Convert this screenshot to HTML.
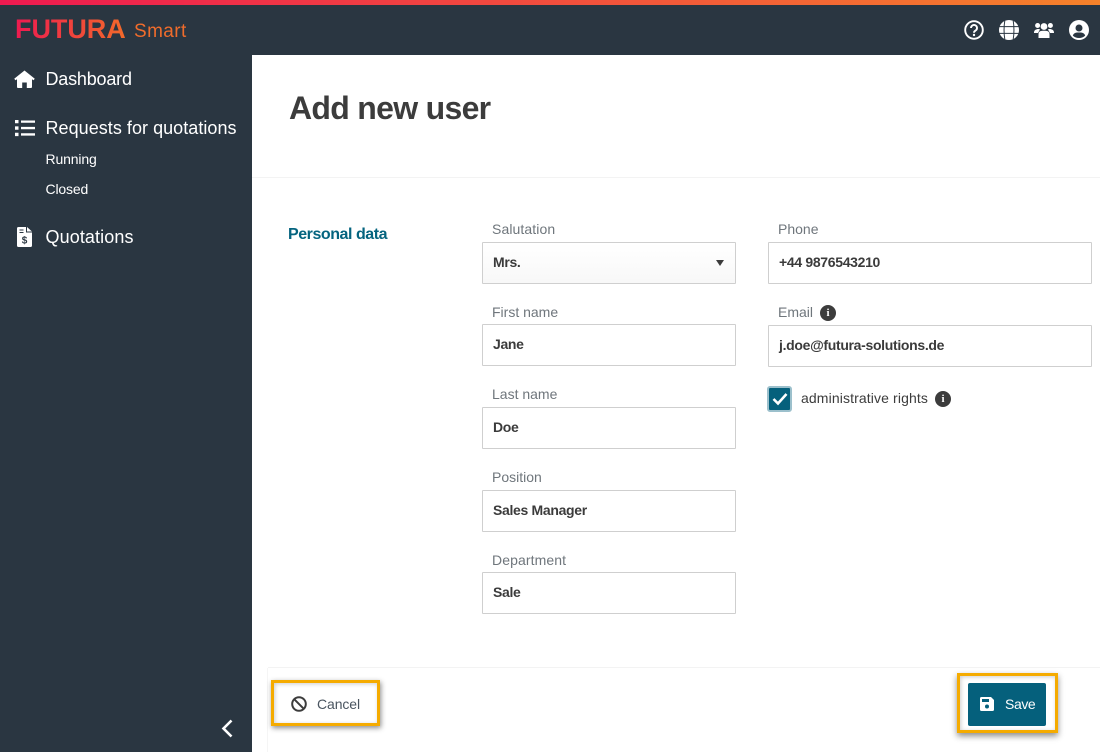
<!DOCTYPE html>
<html><head><meta charset="utf-8"><style>
html,body{margin:0;padding:0;width:1100px;height:752px;overflow:hidden;background:#fff;font-family:"Liberation Sans",sans-serif}
.a{position:absolute;white-space:nowrap}
#side{left:0;top:0;width:252px;height:752px;background:#2a3641}
.nav{color:#fff;font-size:18px;line-height:24px;left:45.500px}
.sub{color:#fff;font-size:14px;line-height:18px;left:45.500px;letter-spacing:-.15px}
.lbl{color:#6f767c;font-size:14px;line-height:18px}
.inp{box-sizing:border-box;border:1px solid #cfcfcf;border-radius:1px;background:#fff;height:42px;color:#3b3b3b;font-size:14px;font-weight:bold;line-height:38px;padding-left:10px;letter-spacing:-.32px}
.info{width:16px;height:16px;border-radius:50%;background:#3c3c3c;color:#fff;font:bold 11px/16px "Liberation Serif",serif;text-align:center}
svg{position:absolute;overflow:visible}
</style></head><body>
<div class="a" id="side"></div>
<div class="a" style="left:0;top:0;width:1100px;height:55px;background:#2a3641"></div>
<div class="a" style="left:0;top:0;width:1100px;height:5px;background:linear-gradient(90deg,#ee1a50,#f5822a)"></div>
<div class="a" style="left:15px;top:13px;font-size:27px;line-height:32px;font-weight:bold;letter-spacing:-.05px;background:linear-gradient(90deg,#ee1a50,#f26a2a);-webkit-background-clip:text;background-clip:text;color:transparent">FUTURA</div>
<div class="a" style="left:134px;top:20px;font-size:19px;line-height:24px;letter-spacing:.4px;color:#ef6c2c">Smart</div>

<svg style="left:964px;top:20px" width="20" height="20" viewBox="0 0 20 20"><circle cx="10" cy="10" r="8.800" fill="none" stroke="#fff" stroke-width="1.900"/><path d="M7 8a3 3 0 1 1 4.600 2.500c-1 .7-1.600 1-1.600 2.200" fill="none" stroke="#fff" stroke-width="1.900"/><circle cx="10" cy="15" r="1.200" fill="#fff"/></svg>
<svg style="left:999px;top:20px" width="20" height="20" viewBox="0 0 20 20"><circle cx="10" cy="10" r="10" fill="#fff"/><path d="M0 6.600H20M0 13.400H20" stroke="#2a3641" stroke-width="1" fill="none"/><path d="M5.800 .8C4.800 6 4.800 14 5.800 19.200M14.200 .8C15.200 6 15.200 14 14.200 19.200" stroke="#2a3641" stroke-width="1" fill="none"/></svg>
<svg style="left:1034px;top:22px" width="20" height="16" viewBox="0 0 20 16"><circle cx="3.600" cy="3.500" r="2.500" fill="#fff"/><circle cx="16.400" cy="3.500" r="2.500" fill="#fff"/><circle cx="10" cy="4.500" r="3.400" fill="#fff"/><path d="M0 10.500C0 7 5 6.500 6 7.500L4 11H0ZM20 10.500C20 7 15 6.500 14 7.500L16 11H20ZM4.500 16V12.500C4.500 9 7 8.800 10 8.800S15.500 9 15.500 12.500V16Z" fill="#fff"/></svg>
<svg style="left:1069px;top:20px" width="20" height="20" viewBox="0 0 20 20"><circle cx="10" cy="10" r="10" fill="#fff"/><circle cx="10" cy="8" r="3.500" fill="#2a3641"/><path d="M3.800 15.500C5 12.500 7.500 12.500 10 12.500S15 12.500 16.200 15.500C14.700 17.200 12.500 18 10 18S5.300 17.200 3.800 15.500Z" fill="#2a3641"/></svg>

<svg style="left:14px;top:70px" width="21" height="18" viewBox="0 0 21 18"><path d="M10.500 .5L20.800 8.800L19.500 10.300L18 9.200V17Q18 18 17 18H12.800V12.500H8.200V18H4Q3 18 3 17V9.200L1.500 10.300L.2 8.800Z" fill="#fff"/></svg>
<div class="a nav" style="top:67px;letter-spacing:-.2px">Dashboard</div>
<svg style="left:15px;top:120px" width="20" height="16" viewBox="0 0 20 16"><path d="M0 0h3.500v3.300H0zM0 6.400h3.500v3.300H0zM0 12.800h3.500v3.300H0zM6 .5h14v2.300H6zM6 6.900h14v2.300H6zM6 13.300h14v2.300H6z" fill="#fff"/></svg>
<div class="a nav" style="top:116px;letter-spacing:.04px">Requests for quotations</div>
<div class="a sub" style="top:150px">Running</div>
<div class="a sub" style="top:180px">Closed</div>
<svg style="left:17px;top:227px" width="15" height="20" viewBox="0 0 15 20"><path d="M1.500 0H9V5.500H15V18.500Q15 20 13.500 20H1.500Q0 20 0 18.500V1.500Q0 0 1.500 0ZM10 0L15 4.500H10Z" fill="#fff"/><text x="7.500" y="16.500" font-family="Liberation Sans" font-size="10" font-weight="bold" text-anchor="middle" fill="#2a3641">$</text><path d="M2.500 3h4M2.500 5.500h4" stroke="#2a3641"/></svg>
<div class="a nav" style="top:225px;letter-spacing:.1px">Quotations</div>
<svg style="left:221px;top:719px" width="13" height="19" viewBox="0 0 13 19"><path d="M10.500 1.500L2.500 9.500L10.500 17.500" fill="none" stroke="#fff" stroke-width="2.600"/></svg>

<div class="a" style="left:289px;top:89px;font-size:32px;line-height:38px;font-weight:bold;letter-spacing:-.7px;color:#3c3c3c">Add new user</div>
<div class="a" style="left:252px;top:177px;width:848px;height:1px;background:#f3f3f3"></div>
<div class="a" style="left:288px;top:225px;font-size:16px;line-height:20px;font-weight:bold;letter-spacing:-.45px;color:#05647f">Personal data</div>

<div class="a lbl" style="left:492px;top:220px;letter-spacing:.1px">Salutation</div>
<div class="a inp" style="left:482px;top:242px;width:254px;background:linear-gradient(#fff,#f8f8f8)">Mrs.</div>
<svg style="left:716px;top:260px" width="8" height="6"><path d="M0 0H8L4 6Z" fill="#3c3c3c"/></svg>
<div class="a lbl" style="left:492px;top:303px">First name</div>
<div class="a inp" style="left:482px;top:324px;width:254px">Jane</div>
<div class="a lbl" style="left:492px;top:385px">Last name</div>
<div class="a inp" style="left:482px;top:407px;width:254px">Doe</div>
<div class="a lbl" style="left:492px;top:468px">Position</div>
<div class="a inp" style="left:482px;top:490px;width:254px">Sales Manager</div>
<div class="a lbl" style="left:492px;top:551px;letter-spacing:.1px">Department</div>
<div class="a inp" style="left:482px;top:572px;width:254px">Sale</div>

<div class="a lbl" style="left:778px;top:220px">Phone</div>
<div class="a inp" style="left:768px;top:242px;width:324px">+44 9876543210</div>
<div class="a lbl" style="left:778px;top:303px">Email</div>
<div class="a info" style="left:820px;top:305px">i</div>
<div class="a inp" style="left:768px;top:325px;width:324px">j.doe@futura-solutions.de</div>
<div class="a" style="left:767px;top:386px;width:25px;height:26px;box-sizing:border-box;background:#05607c;border:2px solid #9cc0cc;border-radius:3px"></div>
<svg style="left:772px;top:392px" width="16" height="14"><path d="M1.500 7L6 11.500L14.500 2" fill="none" stroke="#fff" stroke-width="2.600"/></svg>
<div class="a" style="left:801px;top:389px;font-size:14px;line-height:18px;letter-spacing:.12px;color:#3c3c3c">administrative rights</div>
<div class="a info" style="left:935px;top:391px">i</div>

<div class="a" style="left:268px;top:667px;width:832px;height:1px;background:#f3f3f3"></div>
<div class="a" style="left:267px;top:668px;width:1px;height:84px;background:#f5f5f5"></div>

<div class="a" style="left:271px;top:680px;width:109px;height:46px;box-sizing:border-box;border:3px solid #f5ab00;box-shadow:1px 2px 5px rgba(0,0,0,.45),inset 1px 1px 4px rgba(0,0,0,.2)"></div>
<svg style="left:291px;top:696px" width="16" height="16" viewBox="0 0 16 16"><circle cx="8" cy="8" r="6.800" fill="none" stroke="#3c3c3c" stroke-width="2"/><path d="M3.200 3.200L12.800 12.800" stroke="#3c3c3c" stroke-width="2"/></svg>
<div class="a" style="left:317px;top:695px;font-size:14px;line-height:18px;letter-spacing:-.1px;color:#4a5560">Cancel</div>

<div class="a" style="left:957px;top:673px;width:101px;height:60px;box-sizing:border-box;border:3px solid #f5ab00;box-shadow:0 3px 6px rgba(0,0,0,.45),inset 1px 1px 4px rgba(0,0,0,.2)"></div>
<div class="a" style="left:968px;top:683px;width:78px;height:43px;background:#05607c;border-radius:2px"></div>
<svg style="left:980px;top:697px" width="14" height="14" viewBox="0 0 14 14"><path d="M1.500 0H11L14 3V12.500Q14 14 12.500 14H1.500Q0 14 0 12.500V1.500Q0 0 1.500 0Z" fill="#fff"/><path d="M2 2H9V5H2Z" fill="#05607c"/><circle cx="7" cy="9.500" r="2" fill="#05607c"/></svg>
<div class="a" style="left:1005px;top:695px;font-size:14px;line-height:18px;letter-spacing:-.4px;color:#fff">Save</div>
</body></html>
